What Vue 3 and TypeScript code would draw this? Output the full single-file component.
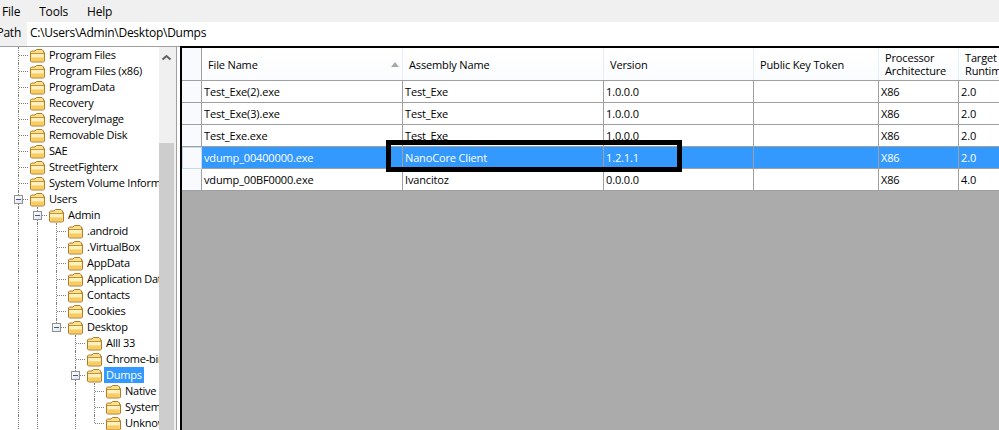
<script setup lang="ts">
interface TreeRow {
  label: string
  level: number
  guides: number[]
  toggle?: boolean
  end?: boolean
  selected?: boolean
}

const rows: TreeRow[] = [
  { label: 'Program Files', level: 0, guides: [0] },
  { label: 'Program Files (x86)', level: 0, guides: [0] },
  { label: 'ProgramData', level: 0, guides: [0] },
  { label: 'Recovery', level: 0, guides: [0] },
  { label: 'RecoveryImage', level: 0, guides: [0] },
  { label: 'Removable Disk', level: 0, guides: [0] },
  { label: 'SAE', level: 0, guides: [0] },
  { label: 'StreetFighterx', level: 0, guides: [0] },
  { label: 'System Volume Information', level: 0, guides: [0] },
  { label: 'Users', level: 0, guides: [0], toggle: true },
  { label: 'Admin', level: 1, guides: [0, 1], toggle: true },
  { label: '.android', level: 2, guides: [0, 1, 2] },
  { label: '.VirtualBox', level: 2, guides: [0, 1, 2] },
  { label: 'AppData', level: 2, guides: [0, 1, 2] },
  { label: 'Application Data', level: 2, guides: [0, 1, 2] },
  { label: 'Contacts', level: 2, guides: [0, 1, 2] },
  { label: 'Cookies', level: 2, guides: [0, 1, 2] },
  { label: 'Desktop', level: 2, guides: [0, 1, 2], toggle: true, end: true },
  { label: 'Alll 33', level: 3, guides: [0, 1, 3] },
  { label: 'Chrome-bin', level: 3, guides: [0, 1, 3] },
  { label: 'Dumps', level: 3, guides: [0, 1, 3], toggle: true, selected: true },
  { label: 'Native', level: 4, guides: [0, 1, 3, 4] },
  { label: 'System', level: 4, guides: [0, 1, 3, 4] },
  { label: 'Unknown', level: 4, guides: [0, 1, 3, 4], end: true }
]

const columns = [
  { title: 'File Name', width: 201, sorted: true },
  { title: 'Assembly Name', width: 201 },
  { title: 'Version', width: 150 },
  { title: 'Public Key Token', width: 125 },
  { title: 'Processor Architecture', width: 80 },
  { title: 'Target Runtime', width: 60 }
]

const files = [
  ['Test_Exe(2).exe', 'Test_Exe', '1.0.0.0', '', 'X86', '2.0'],
  ['Test_Exe(3).exe', 'Test_Exe', '1.0.0.0', '', 'X86', '2.0'],
  ['Test_Exe.exe', 'Test_Exe', '1.0.0.0', '', 'X86', '2.0'],
  ['vdump_00400000.exe', 'NanoCore Client', '1.2.1.1', '', 'X86', '2.0'],
  ['vdump_00BF0000.exe', 'Ivancitoz', '0.0.0.0', '', 'X86', '4.0']
]
const selectedIndex = 3
</script>

<template>
  <div class="app">
    <nav class="menu">
      <span>File</span>
      <span>Tools</span>
      <span>Help</span>
    </nav>
    <div class="pathbar">
      <span class="path-label">Path</span>
      <span class="path-value">C:\Users\Admin\Desktop\Dumps</span>
    </div>
    <div class="main">
      <aside class="tree-pane">
        <div class="tree">
          <div v-for="row in rows" :key="row.label" class="row">
            <span
              v-for="g in row.guides"
              :key="g"
              class="vguide"
              :class="{ half: row.end && g === row.level }"
              :style="{ left: 18 + g * 19 + 'px' }"
            ></span>
            <span class="hguide" :style="{ left: 19 + row.level * 19 + 'px' }"></span>
            <span v-if="row.toggle" class="toggle" :style="{ left: 14 + row.level * 19 + 'px' }"></span>
            <span class="node" :style="{ paddingLeft: 29 + row.level * 19 + 'px' }">
              <svg class="folder" width="17" height="16" viewBox="0 0 17 16">
                <path d="M1.5 14V5L2.5 4H6L7.5 2.5H13L14.5 4V5.5H15.5V14L14.5 15H2.5Z" fill="#ffe08a" stroke="#b07c28" />
                <path d="M2.5 7H14.5V10.5H2.5Z" fill="#fff2c0" />
                <path d="M2.5 10.5H14.5V14H2.5Z" fill="#f8cc62" />
                <path d="M2 6.5H15" stroke="#c49238" />
              </svg>
              <span class="label" :class="{ selected: row.selected }">{{ row.label }}</span>
            </span>
          </div>
        </div>
        <div class="scrollbar">
          <svg class="scroll-up" width="17" height="17" viewBox="0 0 17 17">
            <path d="M3.5 12.5L7.5 9L11.5 12.5" fill="none" stroke="#606060" stroke-width="2" />
          </svg>
          <div class="thumb"></div>
        </div>
      </aside>
      <section class="grid-pane">
        <div class="grid-head">
          <div class="row-head"></div>
          <div
            v-for="col in columns"
            :key="col.title"
            class="head-cell"
            :style="{ width: col.width + 'px' }"
          >
            <span class="head-text">{{ col.title }}</span>
            <span v-if="col.sorted" class="sort"></span>
          </div>
        </div>
        <div
          v-for="(file, i) in files"
          :key="file[0]"
          class="grid-row"
          :class="{ active: i === selectedIndex }"
        >
          <div class="row-head"></div>
          <div
            v-for="(value, c) in file"
            :key="c"
            class="cell"
            :style="{ width: columns[c].width + 'px' }"
          >{{ value }}</div>
        </div>
        <div class="callout"></div>
      </section>
    </div>
  </div>
</template>

<style>
html, body { margin: 0; background: #fff; overflow: hidden; }
</style>

<style scoped>
.app {
  width: 999px;
  height: 430px;
  overflow: hidden;
  font-family: "Open Sans", "Noto Sans", sans-serif;
  font-size: 11px;
  letter-spacing: -0.15px;
  color: #000;
  display: flex;
  flex-direction: column;
}
.menu {
  height: 22px;
  background: #f0f0f0;
  display: flex;
  align-items: center;
  gap: 19px;
  font-size: 12px;
  letter-spacing: -0.2px;
  padding-left: 2px;
  box-sizing: border-box;
  flex: none;
}
.pathbar {
  height: 24px;
  display: flex;
  align-items: stretch;
  flex: none;
  background: #fff;
  font-size: 12px;
  letter-spacing: -0.25px;
  line-height: 22px;
}
.path-label {
  background: #f0f0f0;
  width: 27px;
  padding-right: 6px;
  box-sizing: border-box;
  flex: none;
  display: flex;
  justify-content: flex-end;
}
.path-value { padding-left: 3px; }
.main {
  flex: 1;
  display: flex;
  min-height: 0;
}
.tree-pane {
  width: 180px;
  flex: none;
  display: flex;
  background: #fff;
  box-sizing: border-box;
  border-top: 1px solid #a0a0a0;
  padding-right: 3px;
}
.tree {
  width: 159px;
  flex: none;
  background: #fff;
  overflow: hidden;
  letter-spacing: -0.25px;
}
.row {
  position: relative;
  height: 16px;
  white-space: nowrap;
}
.vguide {
  position: absolute;
  top: 0;
  bottom: 0;
  width: 0;
  border-left: 1px dotted #808080;
}
.vguide.half { bottom: 8px; }
.hguide {
  position: absolute;
  top: 8px;
  width: 9px;
  height: 0;
  border-top: 1px dotted #808080;
}
.toggle {
  position: absolute;
  top: 4px;
  width: 9px;
  height: 9px;
  box-sizing: border-box;
  background: linear-gradient(135deg, #fff, #dfe3ea);
  border: 1px solid #919191;
}
.toggle::after {
  content: "";
  position: absolute;
  left: 1px;
  top: 3px;
  width: 5px;
  height: 1px;
  background: #3a5a9c;
}
.node {
  position: relative;
  display: flex;
  align-items: center;
  height: 16px;
  box-sizing: border-box;
}
.folder { flex: none; }
.label {
  margin-left: 1px;
  padding: 0 2px;
  line-height: 16px;
}
.label.selected {
  background: #3399ff;
  color: #fff;
}
.scrollbar {
  width: 18px;
  flex: none;
  background: #f0f0f0;
  border-right: 1px solid #a0a0a0;
  box-sizing: border-box;
  display: flex;
  flex-direction: column;
}
.scroll-up { flex: none; }
.thumb {
  margin-top: 79px;
  margin-right: 2px;
  flex: 1;
  background: #cdcdcd;
}
.grid-pane {
  flex: 1;
  position: relative;
  background: #ababab;
  border-top: 2px solid #000;
  border-left: 2px solid #000;
  min-width: 0;
  overflow: hidden;
}
.grid-head {
  display: flex;
  height: 32px;
  background: linear-gradient(#ffffff, #fbfcff);
  border-bottom: 1px solid #a0a0a0;
}
.row-head {
  width: 19px;
  flex: none;
  background: #f9fafd;
  border-right: 1px solid #a0a0a0;
  box-sizing: content-box;
}
.head-cell {
  flex: none;
  box-sizing: border-box;
  display: flex;
  align-items: center;
  position: relative;
  padding-left: 6px;
  border-right: 1px solid #e6eefa;
  line-height: 13px;
}
.sort {
  position: absolute;
  right: 3px;
  top: 14px;
  width: 0;
  height: 0;
  border-left: 4.5px solid transparent;
  border-right: 4.5px solid transparent;
  border-bottom: 5px solid #a8a8a8;
}
.grid-row {
  display: flex;
  height: 22px;
  background: #fff;
  box-sizing: border-box;
  border-bottom: 1px solid #a0a0a0;
}
.cell {
  flex: none;
  box-sizing: border-box;
  padding: 0 2px;
  line-height: 21px;
  border-right: 1px solid #a0a0a0;
  white-space: nowrap;
  overflow: hidden;
}
.grid-row.active .cell {
  background: #3399ff;
  color: #fff;
}
.grid-row.active .row-head {
  width: 20px;
  height: 22px;
  border: 1px solid #c8d8ee;
  box-sizing: border-box;
}
.callout {
  position: absolute;
  left: 204px;
  top: 92px;
  width: 296px;
  height: 32px;
  box-sizing: border-box;
  border: 5px solid #000;
}
</style>
